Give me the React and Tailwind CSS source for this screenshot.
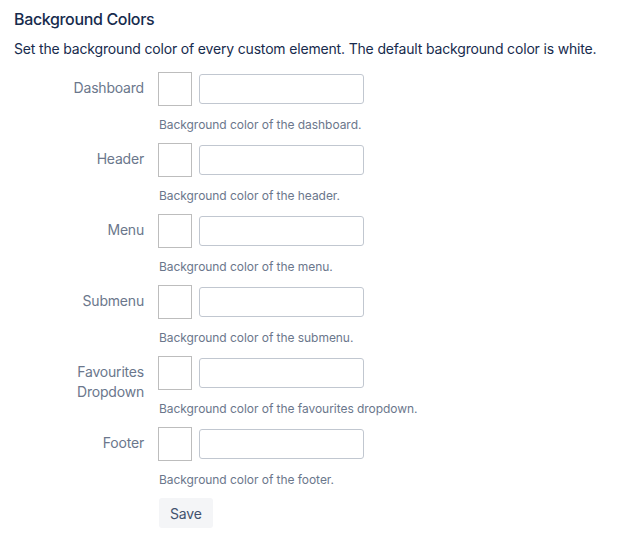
import React from 'react';

const fields = [
  { label: ['Dashboard'], desc: 'Background color of the dashboard.' },
  { label: ['Header'], desc: 'Background color of the header.' },
  { label: ['Menu'], desc: 'Background color of the menu.' },
  { label: ['Submenu'], desc: 'Background color of the submenu.' },
  { label: ['Favourites', 'Dropdown'], desc: 'Background color of the favourites dropdown.' },
  { label: ['Footer'], desc: 'Background color of the footer.' },
];

const ColorRow = ({ label, desc }) => (
  <div className="flex">
    <div className="w-[144px] shrink-0 pt-[6px] text-right text-[14px] leading-[20px] tracking-[-0.2px] text-[#6B778C]">
      {label.map((l) => (
        <div key={l}>{l}</div>
      ))}
    </div>
    <div className="ml-[14px] flex flex-col">
      <div className="flex items-center">
        <div className="w-[34px] h-[34px] border border-[#BDBDBD] bg-white" />
        <input className="ml-[7px] w-[165px] h-[30px] rounded-[3px] border border-[#C1C7D0] bg-white outline-none" />
      </div>
      <p className="mt-[11px] mb-[10px] pl-[1px] text-[12px] leading-[16px] tracking-[-0.05px] text-[#6B778C]">{desc}</p>
    </div>
  </div>
);

export default function App() {
  return (
    <div className="min-h-[544px] bg-white px-[14px] pt-[9px] text-[#172B4D]" style={{ fontFamily: 'Inter, "Noto Sans", sans-serif' }}>
      <h2 className="text-[16px] leading-[20px] font-medium tracking-[-0.35px]">Background Colors</h2>
      <p className="mt-[10px] text-[14px] leading-[20px] tracking-[-0.17px]">
        Set the background color of every custom element. The default background color is white.
      </p>
      <div className="mt-[13px] -ml-[14px]">
        {fields.map((f) => (
          <ColorRow key={f.desc} {...f} />
        ))}
        <div className="ml-[159px]">
          <button className="h-[30px] px-[11px] rounded-[3px] bg-[#F4F5F7] text-[14px] tracking-[-0.2px] text-[#42526E]">Save</button>
        </div>
      </div>
    </div>
  );
}
